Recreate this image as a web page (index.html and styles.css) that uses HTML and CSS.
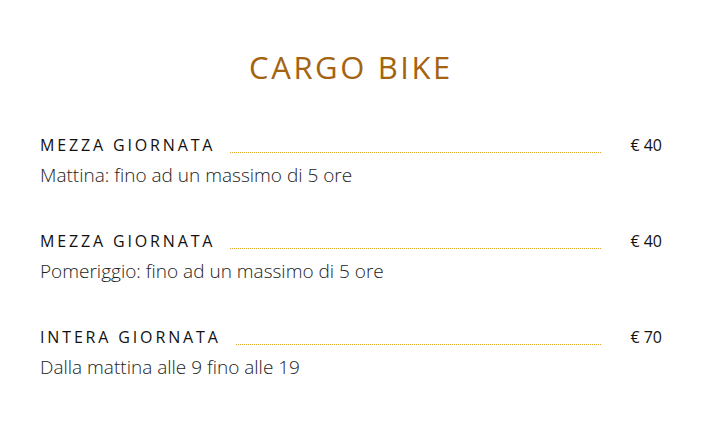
FILE: index.html
```html
<!DOCTYPE html>
<html lang="it">
<head>
<meta charset="utf-8">
<title>Cargo Bike</title>
<link rel="stylesheet" href="styles.css">
</head>
<body>
<section class="menu">
  <h1 class="title">CARGO BIKE</h1>
  <div class="items">
    <div class="item">
      <div class="head">
        <span class="name">MEZZA GIORNATA</span>
        <span class="dots"></span>
        <span class="price">€ 40</span>
      </div>
      <p class="desc">Mattina: fino ad un massimo di 5 ore</p>
    </div>
    <div class="item">
      <div class="head">
        <span class="name">MEZZA GIORNATA</span>
        <span class="dots"></span>
        <span class="price">€ 40</span>
      </div>
      <p class="desc">Pomeriggio: fino ad un massimo di 5 ore</p>
    </div>
    <div class="item">
      <div class="head">
        <span class="name">INTERA GIORNATA</span>
        <span class="dots"></span>
        <span class="price">€ 70</span>
      </div>
      <p class="desc">Dalla mattina alle 9 fino alle 19</p>
    </div>
  </div>
</section>
</body>
</html>
```
FILE: styles.css
```css
html, body {
  margin: 0;
  padding: 0;
  background: #ffffff;
}
body {
  font-family: "Open Sans", "Liberation Sans", sans-serif;
  color: #1a1a1a;
}
.menu {
  width: 712px;
  height: 422px;
  box-sizing: border-box;
  padding: 47px 50px 0 40px;
}
.title {
  margin: 0;
  text-align: center;
  font-weight: 400;
  font-size: 31px;
  letter-spacing: 2.6px;
  line-height: 40px;
  color: #a4640f;
}
.items {
  margin-top: 46px;
  display: flex;
  flex-direction: column;
  gap: 39px;
}
.item {
  display: flex;
  flex-direction: column;
}
.head {
  display: flex;
  align-items: baseline;
  height: 24px;
}
.name {
  font-size: 16px;
  letter-spacing: 2.85px;
  font-weight: 400;
  color: #111;
  line-height: 24px;
}
.dots {
  flex: 1;
  border-bottom: 1px dotted #d9a62a;
  margin: 0 29px 0 15px;
  align-self: flex-end;
  margin-bottom: 4px;
}
.price {
  font-size: 16px;
  color: #111;
  line-height: 24px;
}
.desc {
  margin: 3px 0 0 0;
  font-size: 19px;
  font-weight: 300;
  line-height: 30px;
  color: #222;
}
```
